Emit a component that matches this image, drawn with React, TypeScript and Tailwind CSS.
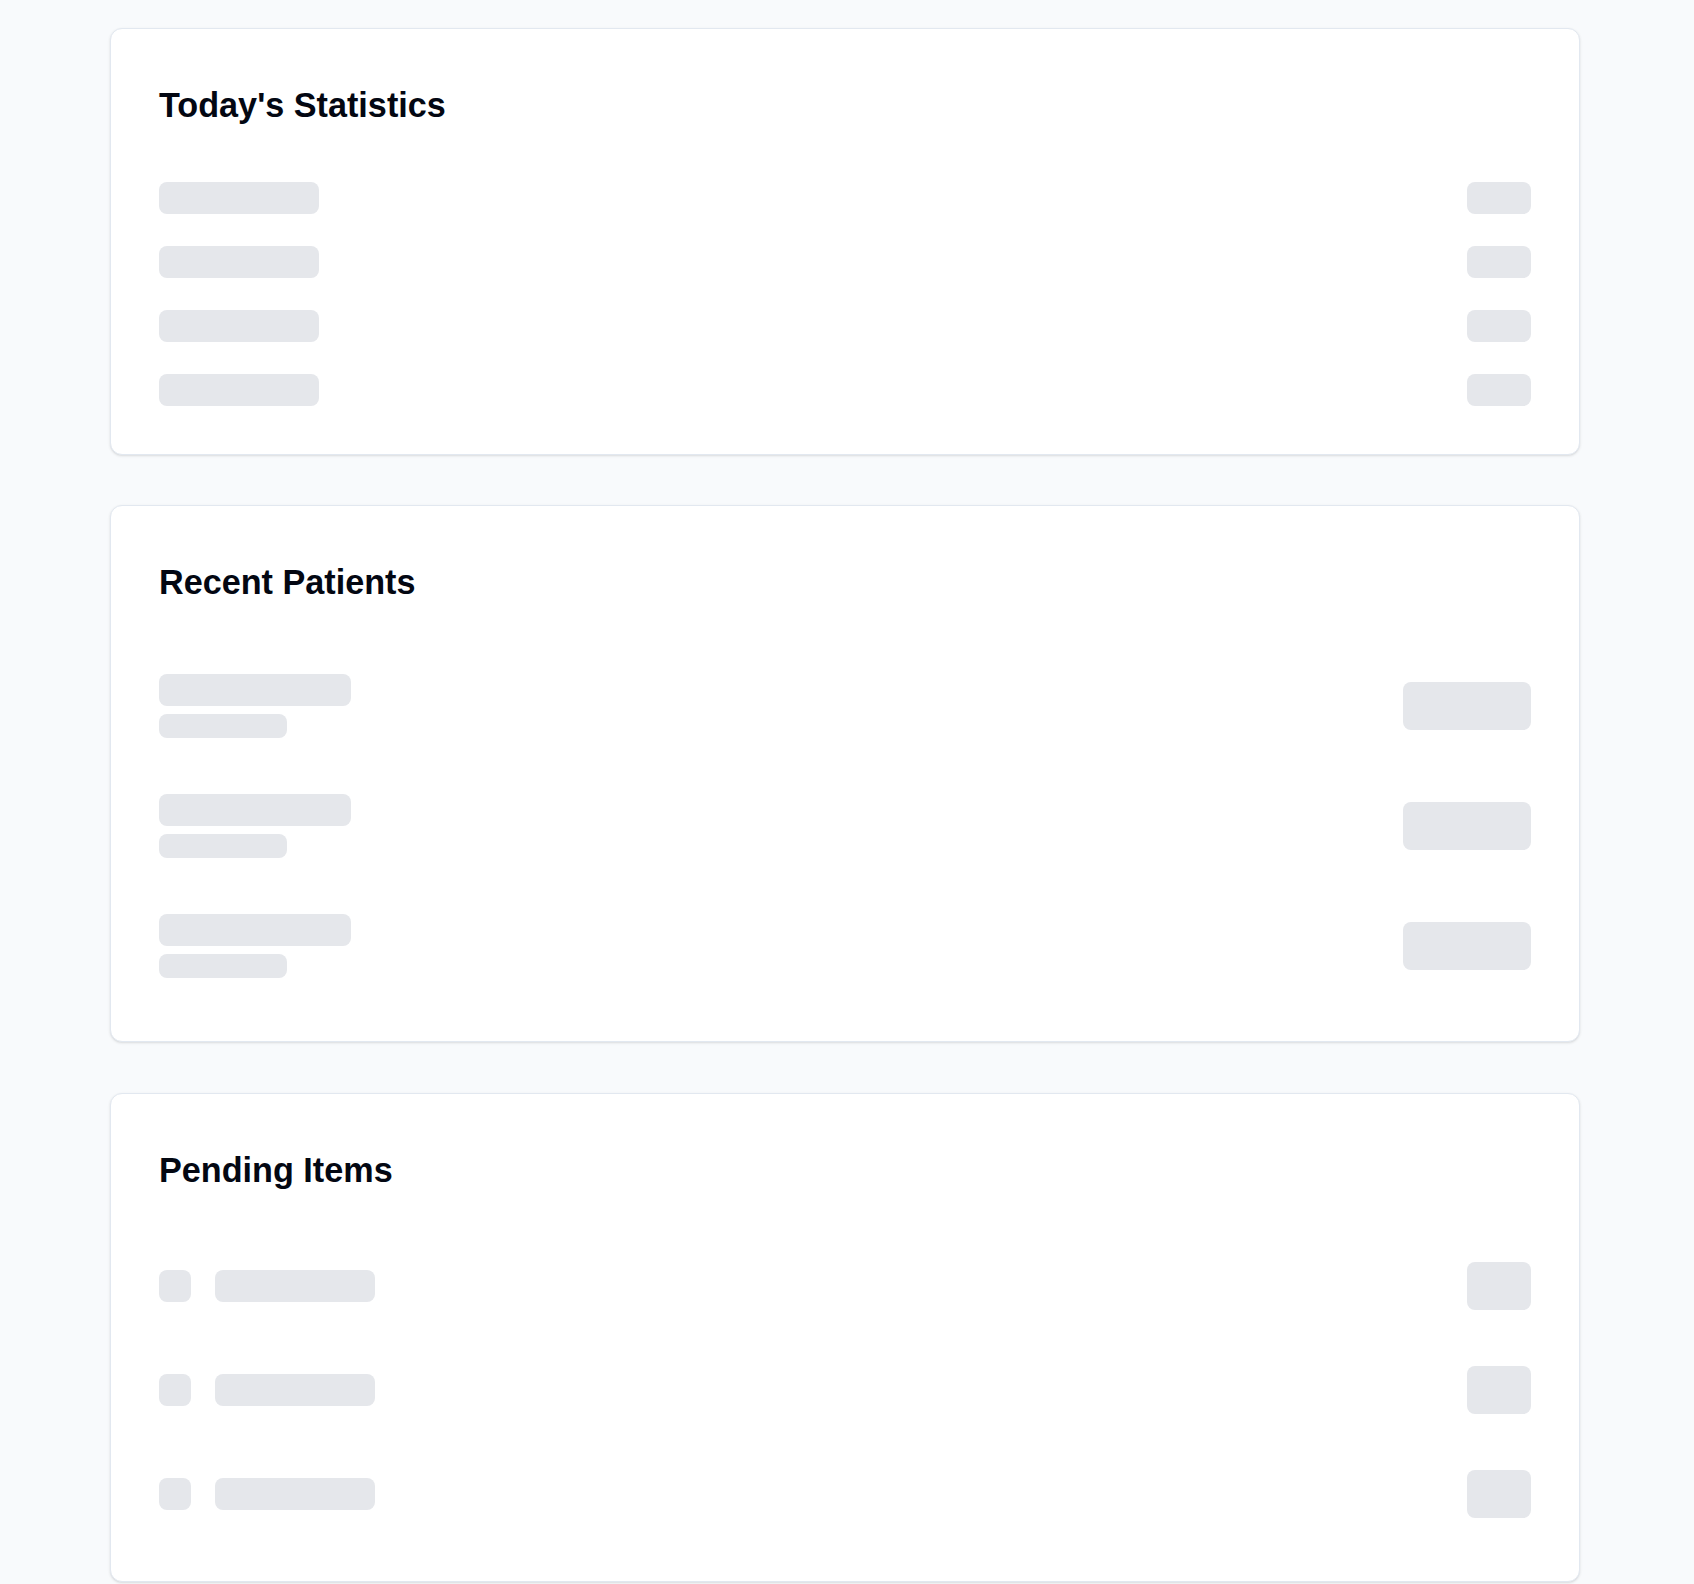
import React from "react";

const Bar = ({ className }: { className: string }) => (
  <div className={`rounded-lg bg-[#e5e7eb] ${className}`} />
);

const Card = ({
  title,
  children,
  className = "",
}: {
  title: string;
  children: React.ReactNode;
  className?: string;
}) => (
  <div className={`rounded-xl border border-[#e2e8f0] bg-white p-12 shadow-sm ${className}`}>
    <h2 className="mb-[49px] text-[34.2px] font-bold leading-[56px] text-[#030712] [font-family:'Liberation_Sans',Arial,sans-serif]">
      {title}
    </h2>
    {children}
  </div>
);

export default function App() {
  return (
    <div className="min-h-screen bg-[#f8fafc] pt-[28px] pb-12">
      <div className="ml-[110px] flex w-[1470px] flex-col gap-[50px]">
        <Card title="Today's Statistics">
          <div className="flex flex-col gap-8">
            {[0, 1, 2, 3].map((i) => (
              <div key={i} className="flex items-center justify-between">
                <Bar className="h-8 w-40" />
                <Bar className="h-8 w-16" />
              </div>
            ))}
          </div>
        </Card>
        <Card title="Recent Patients">
          <div className="flex flex-col gap-[26px]">
            {[0, 1, 2].map((i) => (
              <div key={i} className="flex items-center justify-between py-[15px]">
                <div className="flex flex-col gap-2">
                  <Bar className="h-8 w-48" />
                  <Bar className="h-6 w-32" />
                </div>
                <Bar className="h-12 w-32" />
              </div>
            ))}
          </div>
        </Card>
        <Card title="Pending Items" className="mt-px">
          <div className="flex flex-col gap-[26px]">
            {[0, 1, 2].map((i) => (
              <div key={i} className="flex items-center justify-between py-[15px]">
                <div className="flex items-center gap-6">
                  <Bar className="h-8 w-8" />
                  <Bar className="h-8 w-40" />
                </div>
                <Bar className="h-12 w-16" />
              </div>
            ))}
          </div>
        </Card>
      </div>
    </div>
  );
}
